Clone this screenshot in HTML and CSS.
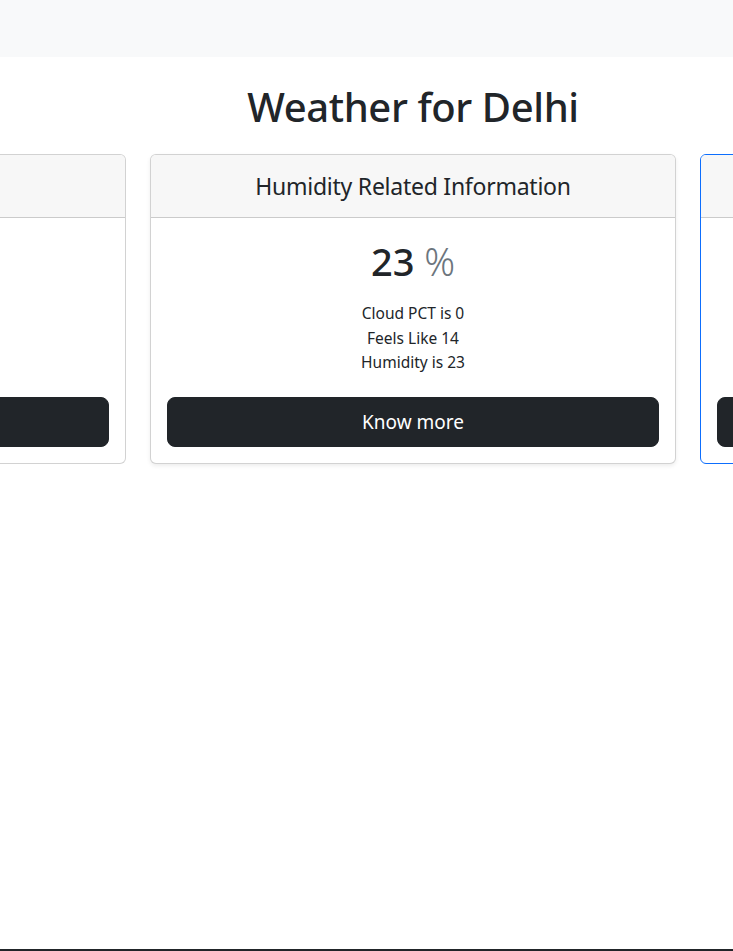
FILE: index.html
```html
<!DOCTYPE html>
<html lang="en">
<head>
<meta charset="utf-8">
<title>Weather for Delhi</title>
<link rel="stylesheet" href="styles.css">
</head>
<body>
<nav class="topbar"></nav>
<main class="page">
  <h1 class="page-title">Weather for Delhi</h1>
  <div class="cards">
    <div class="card">
      <div class="card-header"><span>Temperature Info</span></div>
      <div class="card-body">
        <div class="value">14 <span class="unit">°C</span></div>
        <ul class="facts">
          <li>Min Temp is 11</li>
          <li>Max Temp is 16</li>
          <li>Temp is 14</li>
        </ul>
        <button class="btn"><span>Know more</span></button>
      </div>
    </div>
    <div class="card card-shadow">
      <div class="card-header"><span>Humidity Related Information</span></div>
      <div class="card-body">
        <div class="value">23 <span class="unit">%</span></div>
        <ul class="facts">
          <li>Cloud PCT is 0</li>
          <li>Feels Like 14</li>
          <li>Humidity is 23</li>
        </ul>
        <button class="btn"><span>Know more</span></button>
      </div>
    </div>
    <div class="card card-primary">
      <div class="card-header"><span>Wind Related Information</span></div>
      <div class="card-body">
        <div class="value">3 <span class="unit">km/h</span></div>
        <ul class="facts">
          <li>Wind Degrees is 290</li>
          <li>Sunrise is 06:47</li>
          <li>Sunset is 17:46</li>
        </ul>
        <button class="btn"><span>Know more</span></button>
      </div>
    </div>
  </div>
</main>
<footer class="footer"></footer>
</body>
</html>
```

FILE: styles.css
```css
* { box-sizing: border-box; }

html, body {
  margin: 0;
  padding: 0;
}

body {
  font-family: "Noto Sans", "Open Sans", sans-serif;
  color: #212529;
  background: #fff;
  overflow: hidden;
  height: 951px;
  position: relative;
}

.topbar {
  height: 57px;
  background: #f8f9fa;
}

.page {
  width: 826px;
}

.page-title {
  margin: 26px 0 0;
  text-align: center;
  font-size: 40px;
  font-weight: 500;
  line-height: 48px;
  letter-spacing: -0.4px;
}

.cards {
  margin-top: 23px;
  display: flex;
  justify-content: center;
  gap: 24px;
}

.card {
  flex: 0 0 526px;
  width: 526px;
  border: 1px solid rgba(0, 0, 0, 0.175);
  border-radius: 6px;
  background: #fff;
  overflow: hidden;
  text-align: center;
}

.card-shadow {
  box-shadow: 0 2px 4px rgba(0, 0, 0, 0.075);
}

.card-primary {
  border-color: #0d6efd;
}

.card-header {
  display: flex;
  justify-content: center;
  background: #f7f7f7;
  border-bottom: 1px solid rgba(0, 0, 0, 0.175);
  padding: 16px 16px;
  height: 63px;
  font-size: 23px;
  line-height: 31px;
  font-weight: 400;
  letter-spacing: -0.25px;
}

.card-body {
  display: flex;
  flex-direction: column;
  align-items: center;
  padding: 19px 16px 16px;
}

.value {
  font-size: 38px;
  line-height: 48px;
  font-weight: 500;
}

.unit {
  color: #6c757d;
  font-weight: 300;
}

.facts {
  list-style: none;
  margin: 16px 0 22px;
  padding: 0;
  display: flex;
  flex-direction: column;
  align-items: center;
  font-size: 15.5px;
  line-height: 24.5px;
}

.btn {
  display: flex;
  justify-content: center;
  align-items: center;
  align-self: stretch;
  height: 50px;
  border: 1px solid #212529;
  border-radius: 8px;
  background: #212529;
  color: #fff;
  font-family: inherit;
  font-size: 19px;
  line-height: 30px;
  padding: 0 16px 0;
}

.footer {
  position: absolute;
  left: 0;
  right: 0;
  bottom: 0;
  height: 2px;
  background: #212529;
}
```
